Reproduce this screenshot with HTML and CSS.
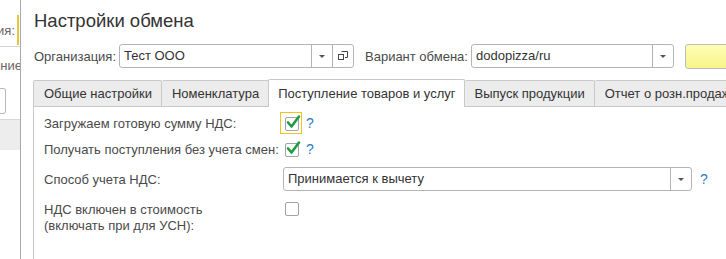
FILE: index.html
```
<!DOCTYPE html>
<html lang="ru">
<head>
<meta charset="utf-8">
<link rel="stylesheet" href="styles.css">
</head>
<body>
<div class="page">
  <div class="behind">
    <div class="b-row1"><span class="b-text">Организация:</span><span class="b-bar"></span></div>
    <div class="b-line"></div>
    <div class="b-row2"><span class="b-text">Отображение</span></div>
    <div class="b-btn"></div>
    <div class="b-band"></div>
  </div>
  <div class="window">
    <div class="title">Настройки обмена</div>
    <div class="header">
      <span class="h-label org-label">Организация:</span>
      <div class="field org-field">
        <span class="field-text">Тест ООО</span>
        <span class="f-btn"><span class="arrow"></span></span>
        <span class="f-btn">
          <svg width="10" height="10" viewBox="0 0 10 10"><path d="M3.5 0.5h6v6h-2.5" fill="none" stroke="#444" stroke-width="1"/><rect x="0.5" y="3.5" width="5" height="5" fill="none" stroke="#444" stroke-width="1"/></svg>
        </span>
      </div>
      <span class="h-label var-label">Вариант обмена:</span>
      <div class="field var-field">
        <span class="field-text">dodopizza/ru</span>
        <span class="f-btn"><span class="arrow"></span></span>
      </div>
      <div class="yellow-btn"></div>
    </div>
    <div class="tabs">
      <div class="tab first">Общие настройки</div>
      <div class="tab">Номенклатура</div>
      <div class="tab active">Поступление товаров и услуг</div>
      <div class="tab">Выпуск продукции</div>
      <div class="tab">Отчет о розн.продажах</div>
    </div>
    <div class="panel">
      <div class="row r1">
        <span class="label">Загружаем готовую сумму НДС:</span>
        <span class="cb-wrap focused"><span class="cb"><svg width="18" height="18" viewBox="0 0 18 18"><path d="M3 8.5l3.5 4 7.5-10" fill="none" stroke="#1f9a45" stroke-width="2.6" stroke-linecap="round" stroke-linejoin="round"/></svg></span></span>
        <span class="help">?</span>
      </div>
      <div class="row r2">
        <span class="label">Получать поступления без учета смен:</span>
        <span class="cb-wrap"><span class="cb"><svg width="18" height="18" viewBox="0 0 18 18"><path d="M3 8.5l3.5 4 7.5-10" fill="none" stroke="#1f9a45" stroke-width="2.6" stroke-linecap="round" stroke-linejoin="round"/></svg></span></span>
        <span class="help">?</span>
      </div>
      <div class="row r3">
        <span class="label">Способ учета НДС:</span>
        <div class="field vat-field">
          <span class="field-text">Принимается к вычету</span>
          <span class="f-btn"><span class="arrow"></span></span>
        </div>
        <span class="help help3">?</span>
      </div>
      <div class="row r4">
        <span class="label">НДС включен в стоимость<br>(включать при для УСН):</span>
        <span class="cb-wrap"><span class="cb"></span></span>
      </div>
    </div>
  </div>
</div>
</body>
</html>
```
FILE: styles.css
```
html, body {
  margin: 0;
  padding: 0;
  background: #fff;
}
body {
  width: 726px;
  height: 259px;
  overflow: hidden;
  font-family: "Liberation Sans", Arial, sans-serif;
  font-size: 13px;
  color: #333;
}
.page {
  display: flex;
  height: 259px;
}
.behind {
  width: 20px;
  flex: none;
  overflow: hidden;
  display: flex;
  flex-direction: column;
  color: #666;
}
.b-row1 {
  margin-top: 15px;
  height: 30px;
  display: flex;
  justify-content: flex-end;
  align-items: center;
  white-space: nowrap;
}
.b-text {
  flex: none;
}
.b-bar {
  flex: none;
  width: 2px;
  height: 30px;
  background: #e8c43a;
  margin-left: 2px;
  margin-right: 1px;
}
.b-line {
  height: 1px;
  background: #d6d6d6;
  margin-top: 1px;
}
.b-row2 {
  height: 20px;
  margin-top: 8px;
  display: flex;
  justify-content: flex-end;
  align-items: center;
  white-space: nowrap;
  margin-right: -2px;
}
.b-btn {
  width: 5px;
  height: 24px;
  margin-top: 13px;
  border: 1px solid #b8b8b8;
  border-left: none;
  border-radius: 0 3px 3px 0;
}
.b-band {
  height: 30px;
  margin-top: 5px;
  background: #ededed;
  border-top: 1px solid #d8d8d8;
}
.window {
  flex: 1;
  min-width: 0;
  border-left: 1px solid #a9a9a9;
  padding-left: 12px;
  display: flex;
  flex-direction: column;
  overflow: hidden;
}
.title {
  margin-top: 10px;
  margin-left: 1px;
  height: 21px;
  line-height: 21px;
  font-size: 18.5px;
  color: #333;
  white-space: nowrap;
}
.header {
  margin-top: 13px;
  height: 24px;
  display: flex;
  align-items: center;
  white-space: nowrap;
}
.h-label {
  color: #4a4a4a;
  flex: none;
}
.org-label {
  margin-left: 1px;
  width: 85px;
}
.var-label {
  margin-left: 11px;
  width: 106px;
}
.field {
  height: 24px;
  box-sizing: border-box;
  border: 1px solid #b4b4b4;
  border-radius: 3px;
  display: flex;
  align-items: stretch;
  flex: none;
  background: #fff;
}
.field-text {
  flex: 1;
  padding-left: 4px;
  line-height: 22px;
  color: #333;
  overflow: hidden;
  white-space: nowrap;
}
.f-btn {
  width: 20px;
  border-left: 1px solid #b4b4b4;
  display: flex;
  align-items: center;
  justify-content: center;
  flex: none;
}
.arrow {
  width: 0;
  height: 0;
  border-left: 3px solid transparent;
  border-right: 3px solid transparent;
  border-top: 3px solid #555;
}
.org-field {
  width: 235px;
}
.var-field {
  width: 203px;
}
.yellow-btn {
  margin-left: 11px;
  width: 60px;
  height: 25px;
  box-sizing: border-box;
  flex: none;
  border: 1px solid #bdbdbd;
  border-radius: 3px;
  background: linear-gradient(#ffffb4, #f7f38a);
}
.tabs {
  margin-top: 11px;
  height: 27px;
  display: flex;
  align-items: flex-end;
  white-space: nowrap;
}
.tab {
  flex: none;
  height: 26px;
  box-sizing: border-box;
  line-height: 25px;
  padding: 0 9px 0 10px;
  background: #ececec;
  border-top: 1px solid #c9c9c9;
  border-right: 1px solid #c9c9c9;
  border-radius: 2px 2px 0 0;
  color: #333;
}
.tab.first {
  border-left: 1px solid #c9c9c9;
}
.tab.active {
  position: relative;
  z-index: 1;
  height: 28px;
  margin-bottom: -1px;
  line-height: 27px;
  background: #fff;
  border-left: 1px solid #c9c9c9;
  margin-left: -1px;
  padding: 0 8px 0 9px;
}
.panel {
  flex: 1;
  border-top: 1px solid #c9c9c9;
  border-left: 1px solid #c9c9c9;
  padding-top: 5px;
  padding-left: 10px;
  display: flex;
  flex-direction: column;
}
.row {
  display: flex;
  align-items: center;
  white-space: nowrap;
}
.label {
  width: 236px;
  flex: none;
  color: #4a4a4a;
}
.r1, .r2 {
  height: 22px;
}
.r2 {
  margin-top: 4px;
}
.r3 {
  margin-top: 7px;
  height: 24px;
}
.r4 {
  margin-top: 11px;
  align-items: flex-start;
}
.r4 .label {
  line-height: 16px;
}
.r4 .cb-wrap {
  padding-top: 0;
  margin-top: -1px;
}
.cb-wrap {
  width: 22px;
  height: 22px;
  box-sizing: border-box;
  padding: 4px 0 0 4px;
  border: 1px solid transparent;
  flex: none;
}
.cb-wrap.focused {
  border-color: #f0c419;
}
.cb {
  display: block;
  width: 14px;
  height: 14px;
  box-sizing: border-box;
  border: 1px solid #a3a3a3;
  border-radius: 2px;
  background: #fff;
  position: relative;
}
.cb svg {
  position: absolute;
  left: -1px;
  top: -4px;
}
.help {
  margin-left: 4px;
  color: #2a7cc7;
  font-size: 14px;
}
.vat-field {
  margin-left: 3px;
  width: 409px;
}
.help3 {
  margin-left: 8px;
}
```
